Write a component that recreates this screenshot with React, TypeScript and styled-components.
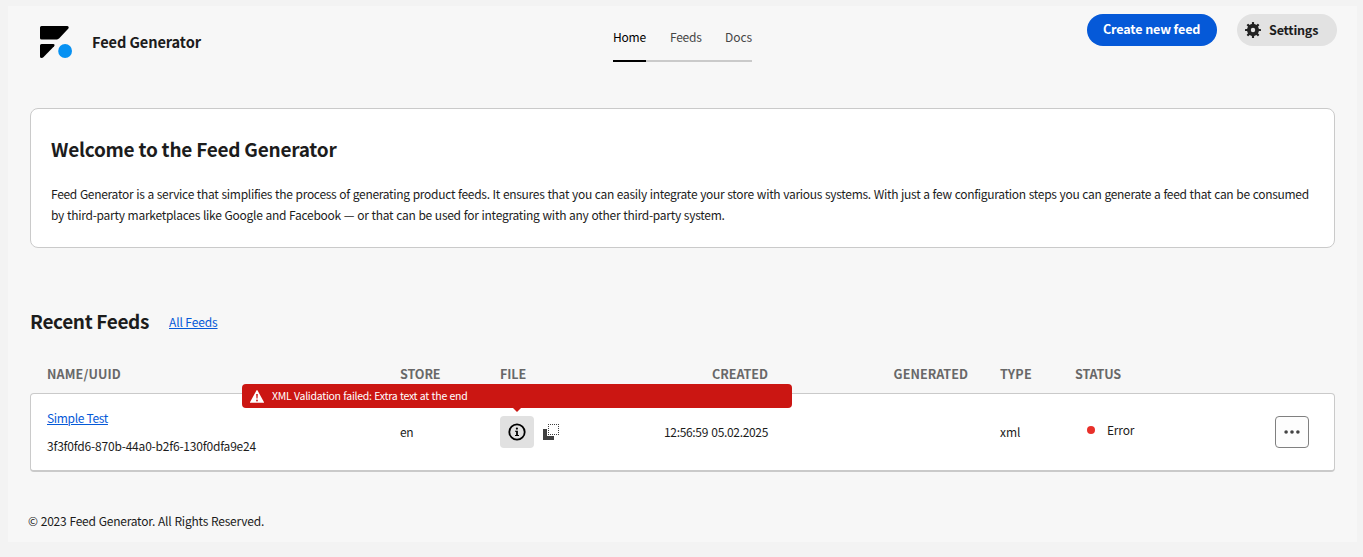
import React from 'react';
import styled, { createGlobalStyle } from 'styled-components';

const GlobalStyle = createGlobalStyle`
  * { box-sizing: border-box; }
  body {
    margin: 0;
    background: #f3f3f3;
    color: #1c1c1c;
    font-family: "Noto Sans CJK SC", "Noto Sans", sans-serif;
    font-size: 12px;
    letter-spacing: -0.2px;
  }
  h1, h2, p { margin: 0; }
  button { font: inherit; letter-spacing: inherit; color: inherit; border: 0; padding: 0; cursor: pointer; }
  svg { display: block; flex: none; }
`;

const Shell = styled.div`
  min-height: 557px;
  padding: 6px 6px 15px 8px;
`;

const Panel = styled.div`
  height: 536px;
  padding: 0 22px;
  background: #f7f7f7;
`;

const Header = styled.header`
  display: grid;
  grid-template-columns: 1fr auto 1fr;
  align-items: start;
  height: 102px;
  margin: 0 -2px;
`;

const Brand = styled.div`
  display: flex;
  gap: 20px;
  padding: 20px 0 0 12px;
`;

const BrandName = styled.span`
  font-size: 14.6px;
  font-weight: 700;
  line-height: 32px;
  letter-spacing: -0.1px;
`;

const Tabs = styled.nav`
  display: flex;
  gap: 24px;
  margin-top: 21px;
  box-shadow: inset 0 -2px #cacaca;
`;

const Tab = styled.a<{ $width: number; $active?: boolean; $spacing: number }>`
  width: ${(p) => p.$width}px;
  height: 35px;
  line-height: 20px;
  white-space: nowrap;
  letter-spacing: ${(p) => p.$spacing}px;
  color: ${(p) => (p.$active ? '#000' : '#464646')};
  border-bottom: 2px solid ${(p) => (p.$active ? '#000' : 'transparent')};
`;

const HeaderActions = styled.div`
  display: flex;
  justify-content: flex-end;
  gap: 20px;
  padding-top: 8px;
`;

const PillButton = styled.button`
  && {
    height: 32px;
    border-radius: 16px;
    font-size: 12.6px;
    font-weight: 700;
    white-space: nowrap;
    text-align: left;
  }
`;

const CreateButton = styled(PillButton)`
  && {
    width: 130px;
    padding: 0 0 3px 16px;
    background: #0559d8;
    color: #fff;
    letter-spacing: -0.15px;
  }
`;

const SettingsButton = styled(PillButton)`
  && {
    display: flex;
    align-items: center;
    gap: 8px;
    width: 100px;
    padding-left: 8px;
    background: #e2e2e2;
    letter-spacing: -0.23px;
  }
`;

const SettingsLabel = styled.span`
  line-height: 20px;
  padding-bottom: 1px;
`;

const Welcome = styled.section`
  height: 140px;
  padding: 26px 20px 0;
  background: #fff;
  border: 1px solid #cacaca;
  border-radius: 8px;
`;

const Heading = styled.h2<{ $spacing: number }>`
  font-size: 19px;
  font-weight: 700;
  line-height: 28px;
  letter-spacing: ${(p) => p.$spacing}px;
  white-space: nowrap;
`;

const Intro = styled.p`
  margin-top: 20px;
  line-height: 21px;
  white-space: nowrap;
  letter-spacing: -0.296px;
  word-spacing: 0.5px;
`;

const IntroEnd = styled.span`
  letter-spacing: -0.27px;
`;

const SectionTitle = styled.div`
  display: flex;
  gap: 20px;
  margin-top: 59px;

  ${Heading} { width: 119px; }
`;

const Link = styled.a<{ $spacing: number }>`
  color: #0559d8;
  line-height: 28px;
  letter-spacing: ${(p) => p.$spacing}px;
  text-decoration: underline;
  text-decoration-thickness: 1px;
  text-underline-offset: 1px;
  white-space: nowrap;
`;

const SectionLink = styled(Link)`
  margin-top: 1px;
`;

const TableGrid = styled.div`
  display: grid;
  grid-template-columns: 353px 100px 100px 168px 200px 107px 1fr 34px;
  align-items: center;
`;

const TableHead = styled(TableGrid)`
  margin: 28px 0 10px;
  padding: 0 26px 0 17px;
  color: #686868;
  font-size: 12.6px;
  font-weight: 700;
  line-height: 19px;
`;

const TableRow = styled(TableGrid)`
  height: 79px;
  padding: 0 25px 0 16px;
  background: #fff;
  border: 1px solid #cacaca;
  border-bottom-width: 2px;
  border-radius: 4px;
`;

const Cell = styled.div<{ $align?: 'right'; $indent?: number; $spacing?: number }>`
  text-align: ${(p) => p.$align ?? 'left'};
  padding-left: ${(p) => p.$indent ?? 0}px;
  letter-spacing: ${(p) => (p.$spacing === undefined ? 'inherit' : `${p.$spacing}px`)};
  white-space: nowrap;
`;

const BodyCell = styled(Cell)`
  line-height: 18px;
  word-spacing: 1px;
`;

const NameCell = styled.div`
  display: flex;
  flex-direction: column;
  align-items: flex-start;
  line-height: 28px;
`;

const FileCell = styled.div`
  display: flex;
  align-items: center;
  gap: 9px;
`;

const InfoButton = styled.button`
  && {
    position: relative;
    display: grid;
    place-items: center;
    width: 34px;
    height: 32px;
    background: #e1e1e1;
    border-radius: 4px;
  }
`;

const Tooltip = styled.span`
  position: absolute;
  bottom: calc(100% + 8px);
  left: 50%;
  display: flex;
  align-items: center;
  gap: 8px;
  width: 550px;
  height: 24px;
  margin-left: -275px;
  padding-left: 8px;
  border-radius: 4px;
  background: #cb1612;
  color: #fff;
  font-size: 10.5px;
  line-height: 22px;
  letter-spacing: -0.27px;
  word-spacing: 0.5px;
  text-align: left;
  white-space: nowrap;

  &::after {
    content: "";
    position: absolute;
    top: 100%;
    left: 50%;
    margin-left: -4px;
    border: 4px solid transparent;
    border-top-color: #cb1612;
    border-bottom: 0;
  }
`;

const TooltipText = styled.span`
  padding-bottom: 1px;
`;

const Status = styled.div`
  display: flex;
  align-items: center;
  gap: 12px;
  padding: 0 0 4px 12px;
  line-height: 18px;
`;

const StatusDot = styled.span`
  width: 8px;
  height: 8px;
  border-radius: 50%;
  background: #e8302a;
`;

const MoreButton = styled.button`
  && {
    display: grid;
    place-items: center;
    width: 34px;
    height: 32px;
    background: #fdfdfd;
    border: 1px solid #808080;
    border-radius: 4px;
  }
`;

const Footer = styled.footer`
  margin: 39px 0 0 -2px;
  line-height: 19px;
  letter-spacing: -0.225px;
  word-spacing: 0.5px;
`;

const Logo = () => (
  <svg width="32" height="32" viewBox="0 0 32 32">
    <path d="M1.5 0H27.2C28.6 0 29.2 1.6 28.2 2.7L19 12.6Q18.2 13.4 17 13.4H1.5Q0 13.4 0 11.9V1.5Q0 0 1.5 0Z" />
    <path d="M1.5 18H13.2C14.6 18 15 19.3 14.1 20.3L3.6 31Q2.7 31.9 1.6 31.9Q0 31.9 0 30.4V19.5Q0 18 1.5 18Z" />
    <circle cx="25.1" cy="25" r="6.9" fill="#0791f2" />
  </svg>
);

const GearIcon = () => (
  <svg width="16" height="16" viewBox="1 1 16 16" fill="#222">
    <path d="M16.45 7.8965H14.8945a5.976 5.976 0 0 0-.921-2.2535L15.076 4.54a.55.55 0 0 0 0-.78l-.8365-.836a.55.55 0 0 0-.78 0L12.357 4.0265a5.962 5.962 0 0 0-2.2535-.9205V1.55a.55.55 0 0 0-.55-.55H8.45a.55.55 0 0 0-.55.55V3.106a5.962 5.962 0 0 0-2.2535.9205L4.544 2.924a.55.55 0 0 0-.78 0L2.924 3.76a.55.55 0 0 0 0 .78L4.0265 5.643a5.976 5.976 0 0 0-.921 2.2535H1.55a.55.55 0 0 0-.55.55V9.55a.55.55 0 0 0 .55.55H3.1055a5.967 5.967 0 0 0 .921 2.2535L2.924 13.456a.55.55 0 0 0 0 .78l.8365.8365a.55.55 0 0 0 .78 0L5.643 13.97a5.962 5.962 0 0 0 2.2535.9205V16.45a.55.55 0 0 0 .55.55H9.55a.55.55 0 0 0 .55-.55V14.894a5.962 5.962 0 0 0 2.2535-.9205L13.456 15.076a.55.55 0 0 0 .78 0l.8365-.8365a.55.55 0 0 0 0-.78L13.97 12.357a5.967 5.967 0 0 0 .921-2.2535H16.45a.55.55 0 0 0 .55-.55V8.45a.55.55 0 0 0-.55-.5535ZM11.207 9A2.207 2.207 0 1 1 9 6.793 2.207 2.207 0 0 1 11.207 9Z" />
  </svg>
);

const InfoIcon = () => (
  <svg width="18" height="18" viewBox="0 0 18 18">
    <circle cx="9" cy="9" r="7.7" fill="none" stroke="#000" strokeWidth="1.8" />
    <circle cx="8.9" cy="5.6" r="1.1" />
    <path d="M7 7.7h2.9v4.2h1.1v1.1H7v-1.1h1.1V8.8H7Z" />
  </svg>
);

const CopyIcon = () => (
  <svg width="16" height="16" viewBox="0 0 16 16" shapeRendering="crispEdges">
    <path d="M0 5h4v7h7v4H0Z" fill="#3f3f3f" />
    <path d="M5 .5h11M5 10.5h11M5.5 2v8M15.5 2v8" stroke="#3f3f3f" strokeDasharray="1 1" />
  </svg>
);

const AlertIcon = () => (
  <svg width="14" height="13" viewBox="0 0 14 13">
    <path d="M6.4.6a.7.7 0 0 1 1.2 0L13.9 11.9a.6.6 0 0 1-.5.9H.6a.6.6 0 0 1-.5-.9Z" fill="#fff" />
    <path d="M6.2 4h1.6L7.5 8.6h-1Z" fill="#cb1612" />
    <circle cx="7" cy="10.5" r=".9" fill="#cb1612" />
  </svg>
);

const MoreIcon = () => (
  <svg width="16" height="16" viewBox="0 0 16 16" fill="#444">
    <circle cx="2.1" cy="8" r="1.8" />
    <circle cx="8" cy="8" r="1.8" />
    <circle cx="13.9" cy="8" r="1.8" />
  </svg>
);

export default function App() {
  return (
    <>
      <GlobalStyle />
      <Shell>
        <Panel>
          <Header>
            <Brand>
              <Logo />
              <BrandName>Feed Generator</BrandName>
            </Brand>
            <Tabs>
              <Tab $width={33} $spacing={-0.2} $active>Home</Tab>
              <Tab $width={31} $spacing={-0.26}>Feeds</Tab>
              <Tab $width={27} $spacing={-0.06}>Docs</Tab>
            </Tabs>
            <HeaderActions>
              <CreateButton>Create new feed</CreateButton>
              <SettingsButton>
                <GearIcon />
                <SettingsLabel>Settings</SettingsLabel>
              </SettingsButton>
            </HeaderActions>
          </Header>

          <Welcome>
            <Heading $spacing={-0.24}>Welcome to the Feed Generator</Heading>
            <Intro>
              Feed Generator is a service that simplifies the process of generating product feeds. It ensures that you can
              easily integrate your store with various systems. With just a few configuration steps you can generate a feed
              that can be consumed
              <br />
              <IntroEnd>
                by third-party marketplaces like Google and Facebook — or that can be used for integrating with any other
                third-party system.
              </IntroEnd>
            </Intro>
          </Welcome>

          <SectionTitle>
            <Heading $spacing={-0.35}>Recent Feeds</Heading>
            <SectionLink $spacing={-0.12}>All Feeds</SectionLink>
          </SectionTitle>

          <TableHead>
            <Cell $spacing={0.12}>NAME/UUID</Cell>
            <Cell $spacing={-0.12}>STORE</Cell>
            <Cell $spacing={-0.1}>FILE</Cell>
            <Cell $align="right" $spacing={-0.05}>CREATED</Cell>
            <Cell $align="right" $spacing={0.03}>GENERATED</Cell>
            <Cell $indent={32} $spacing={0.2}>TYPE</Cell>
            <Cell $spacing={-0.17}>STATUS</Cell>
          </TableHead>
          <TableRow>
            <NameCell>
              <Link $spacing={-0.33}>Simple Test</Link>
              <span>3f3f0fd6-870b-44a0-b2f6-130f0dfa9e24</span>
            </NameCell>
            <BodyCell $spacing={-0.4}>en</BodyCell>
            <FileCell>
              <InfoButton>
                <InfoIcon />
                <Tooltip>
                  <AlertIcon />
                  <TooltipText>XML Validation failed: Extra text at the end</TooltipText>
                </Tooltip>
              </InfoButton>
              <CopyIcon />
            </FileCell>
            <BodyCell $align="right" $spacing={-0.33}>12:56:59 05.02.2025</BodyCell>
            <BodyCell />
            <BodyCell $indent={32} $spacing={-0.1}>xml</BodyCell>
            <Status>
              <StatusDot />
              Error
            </Status>
            <MoreButton>
              <MoreIcon />
            </MoreButton>
          </TableRow>

          <Footer>© 2023 Feed Generator. All Rights Reserved.</Footer>
        </Panel>
      </Shell>
    </>
  );
}
